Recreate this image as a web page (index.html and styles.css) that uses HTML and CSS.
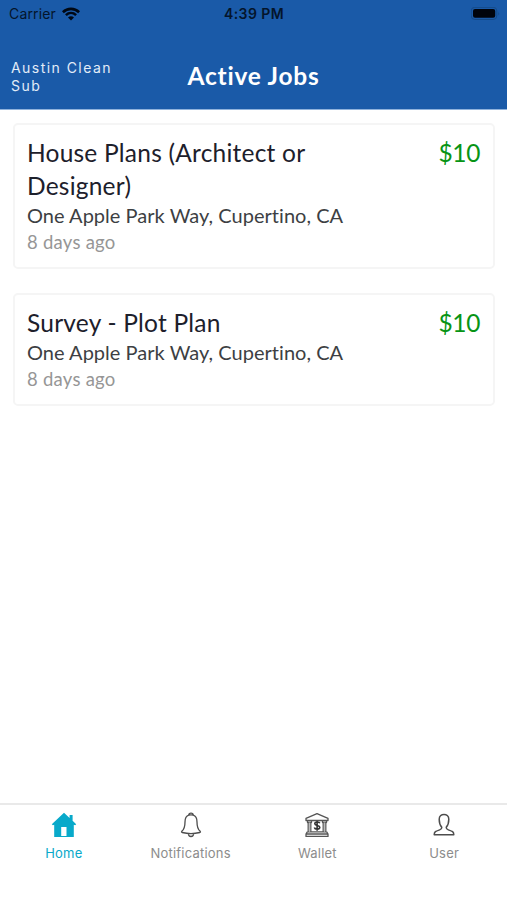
FILE: index.html
```html
<!DOCTYPE html>
<html lang="en">
<head>
<meta charset="utf-8">
<title>Active Jobs</title>
<link rel="stylesheet" href="styles.css">
</head>
<body>
<div class="screen">
  <header class="header">
    <div class="status">
      <div class="carrier"><span class="carrier-name">Carrier</span>
        <svg width="18" height="14" viewBox="0 0 18 14" fill="none" stroke="#000814" stroke-width="2.6"><path d="M.9 5.2C5.5.7 12.5.7 17.1 5.2M3.9 8.1c3-2.8 7.2-2.8 10.2 0"/><path d="M6 10.4c1.8-1.5 4.2-1.5 6 0l-3 3.1z" fill="#000814" stroke="none"/></svg>
      </div>
      <div class="time"><span>4:39 PM</span></div>
      <div class="battery"><svg width="30" height="14" viewBox="0 0 30 14"><rect x=".2" y=".3" width="25.6" height="12.2" rx="3.6" fill="none" stroke="#154a87"/><rect x="2" y="2" width="22.2" height="8.8" rx="2" fill="#00040c"/><path d="M27.4 4.5q1.5 2 0 4z" fill="#154a87"/></svg></div>
    </div>
    <div class="titlebar">
      <div class="company"><span>Austin Clean<br>Sub</span></div>
      <h1 class="title"><span>Active Jobs</span></h1>
      <div></div>
    </div>
  </header>
  <main class="jobs">
    <article class="card">
      <div class="card-top"><h2 class="name"><span>House Plans (Architect or<br>Designer)</span></h2><span class="price">$10</span></div>
      <p class="address"><span>One Apple Park Way, Cupertino, CA</span></p>
      <p class="age"><span>8 days ago</span></p>
    </article>
    <article class="card">
      <div class="card-top"><h2 class="name"><span>Survey - Plot Plan</span></h2><span class="price">$10</span></div>
      <p class="address"><span>One Apple Park Way, Cupertino, CA</span></p>
      <p class="age"><span>8 days ago</span></p>
    </article>
  </main>
  <nav class="tabs">
    <a class="tab active">
      <svg width="26" height="26" viewBox="0 0 26 26"><path fill="#08a9ca" fill-rule="evenodd" d="M13 .8 18.6 6V3h3v5.8l3.6 3.4-1.1 1.1-1.3-.6V25H3.2V12.7l-1.3.6-1.1-1.1zM10.2 15v9h5.3v-9z"/></svg>
      <span>Home</span>
    </a>
    <a class="tab">
      <svg width="26" height="26" viewBox="0 0 26 26" fill="none" stroke="#4d4d4d" stroke-width="1.3" stroke-linejoin="round"><path d="M10.8 3.2C7.5 4.2 7 7 7 10c0 5-.5 7.2-3.2 9.3-.5.6-.3 1 .4 1.2 5 1.2 12.6 1.2 17.6 0 .7-.2.9-.6.4-1.2C19.5 17.2 19 15 19 10c0-3-.5-5.8-3.8-6.8M10.7 3.2c.2-2.8 4.4-2.8 4.6 0-1.5-.4-3.1-.4-4.6 0M10.3 21.5c.2 4 5.2 4 5.4 0"/></svg>
      <span>Notifications</span>
    </a>
    <a class="tab">
      <svg width="26" height="26" viewBox="0 0 26 26" fill="none" stroke="#555" stroke-width="1.3" stroke-linejoin="round"><path d="M2 6.3 13 1.6l11 4.7v2.2H2zM3.5 8.5v2h4v-2M18.5 8.5v2h4v-2M4.2 10.5v9.3M6.8 10.5v9.3M19.2 10.5v9.3M21.8 10.5v9.3M3.3 19.8h19.4M2 22h22v2.4H2zM3.3 19.8 2 22M22.7 19.8 24 22"/><path d="M5.5 10.5v9.3M20.5 10.5v9.3" stroke="#bbb"/><path d="M15.8 11.2c-.6-1.7-5-1.8-5 .5 0 2.4 5 1.1 5 3.6 0 2.4-4.9 2.3-5.5.2M13.1 8.7v10" stroke="#333" stroke-width="1.6"/></svg>
      <span>Wallet</span>
    </a>
    <a class="tab">
      <svg width="26" height="26" viewBox="0 0 26 26" fill="none" stroke="#4d4d4d" stroke-width="1.5" stroke-linejoin="round"><path d="M10.8 15.2C8.5 12.8 8.2 10 8.2 7.2c0-6.4 9.6-6.4 9.6 0 0 2.8-.3 5.6-2.6 8 0 1.6.6 2.2 2.1 2.7 3.6 1.2 5.5 1.6 5.5 4.8H3.2c0-3.2 1.9-3.600 5.500-4.800 1.500-.5 2.100-1.100 2.100-2.700z"/></svg>
      <span>User</span>
    </a>
  </nav>
</div>
</body>
</html>
```
FILE: styles.css
```css
* { box-sizing: border-box; }
body, h1, h2, p { margin: 0; font-weight: 400; }
body { background: #fff; font-family: Lato, sans-serif; font-variant-ligatures: none; }
svg { display: block; flex: none; }
.screen { height: 900px; display: flex; flex-direction: column; overflow: hidden; }
.header { height: 110px; background: #1a5aa8; border-bottom: 1px solid #8fb2dc; }
.status { height: 27px; display: grid; grid-template-columns: 1fr auto 1fr; align-items: center; padding: 0 6px 0 9px; color: #04152b; font: 14px/20px Inter, sans-serif; }
.carrier { display: flex; align-items: center; gap: 6px; }
.carrier-name { letter-spacing: .15px; }
.time { font-weight: 600; letter-spacing: .4px; margin-right: 2px; }
.battery { justify-self: end; }
.titlebar { height: 82px; display: grid; grid-template-columns: 1fr auto 1fr; align-items: center; padding: 18px 11px 0; }
.company { font: 14px/18px Inter, sans-serif; letter-spacing: 1.45px; color: #e2ecf8; }
.title { font-size: 24.5px; line-height: 32px; font-weight: 700; letter-spacing: .75px; color: #fff; }
.title span { display: block; margin-bottom: 2px; }
.jobs { flex: 1; padding: 13px 12px 0 13px; display: flex; flex-direction: column; gap: 24px; }
.card { border: 2px solid #f5f5f5; border-radius: 5px; padding: 11px 13px 12px 12px; }
.card-top { display: flex; justify-content: space-between; }
.name, .price { font-size: 24.5px; line-height: 33px; color: #1d202b; }
.name { letter-spacing: .22px; }
.price { color: #079415; letter-spacing: -.4px; }
.address { font-size: 20px; line-height: 27px; letter-spacing: .03px; color: #3d3f43; }
.age { font-size: 18.5px; line-height: 26px; letter-spacing: .25px; color: #969696; }
.tabs { height: 97px; border-top: 2px solid #e9e9e9; display: grid; grid-template-columns: repeat(4, 1fr); padding-top: 7px; }
.tab { display: flex; flex-direction: column; align-items: center; gap: 6px; padding-left: 1px; font: 13px/18px Inter, sans-serif; letter-spacing: .2px; color: #8c8c8c; }
.active { color: #08a9ca; }
```
